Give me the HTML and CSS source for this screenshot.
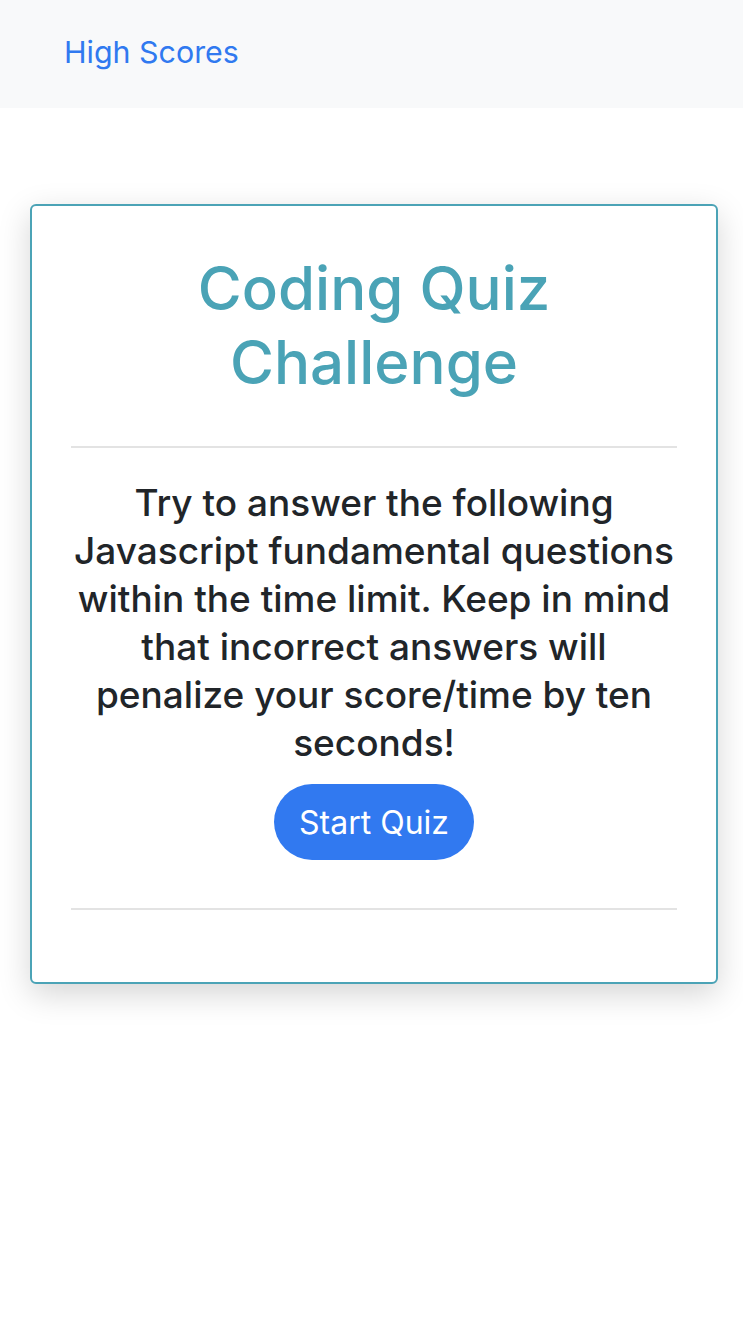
FILE: index.html
```html
<!DOCTYPE html>
<html lang="en">
<head>
<meta charset="utf-8">
<title>Coding Quiz Challenge</title>
<link rel="stylesheet" href="styles.css">
</head>
<body>
<nav class="navbar">
  <a class="nav-link" href="#">High Scores</a>
</nav>
<main class="container">
  <section class="card">
    <h1 class="title">Coding Quiz Challenge</h1>
    <hr class="divider">
    <p class="intro">Try to answer the following Javascript fundamental questions within the time limit. Keep in mind that incorrect answers will penalize your score/time by ten seconds!</p>
    <button class="btn-start" type="button">Start Quiz</button>
    <hr class="divider divider-bottom">
  </section>
</main>
</body>
</html>
```
FILE: styles.css
```css
* { box-sizing: border-box; }
html, body { margin: 0; padding: 0; }
body {
  font-family: Inter, "Noto Sans", "Liberation Sans", sans-serif;
  background: #fff;
  color: #212529;
  min-height: 100vh;
}
.navbar {
  background: #f8f9fa;
  height: 108px;
  display: flex;
  align-items: center;
  padding: 0 64px 4px;
}
.nav-link {
  color: #3079f0;
  text-decoration: none;
  font-size: 30.4px;
}
.container {
  padding: 96px 25px 60px 30px;
}
.card {
  border: 2px solid #4ba3b6;
  border-radius: 6px;
  box-shadow: 0 10px 32px rgba(0,0,0,0.17);
  padding: 41px 39px 72px;
  text-align: center;
  background: #fff;
}
.title {
  color: #4aa3b6;
  font-size: 60px;
  font-weight: 500;
  line-height: 74px;
  margin: 4px 0 0;
}
.divider {
  border: 0;
  border-top: 2px solid #e3e3e3;
  margin: 47px 0 31px;
}
.intro {
  font-size: 37px;
  font-weight: 500;
  line-height: 48px;
  margin: 0 0 17px;
}
.btn-start {
  background: #3179f0;
  color: #fff;
  border: 0;
  border-radius: 40px;
  font-family: inherit;
  font-size: 32px;
  height: 76px;
  padding: 0 25px;
  cursor: pointer;
}
.divider-bottom {
  margin: 48px 0 0;
}
```
